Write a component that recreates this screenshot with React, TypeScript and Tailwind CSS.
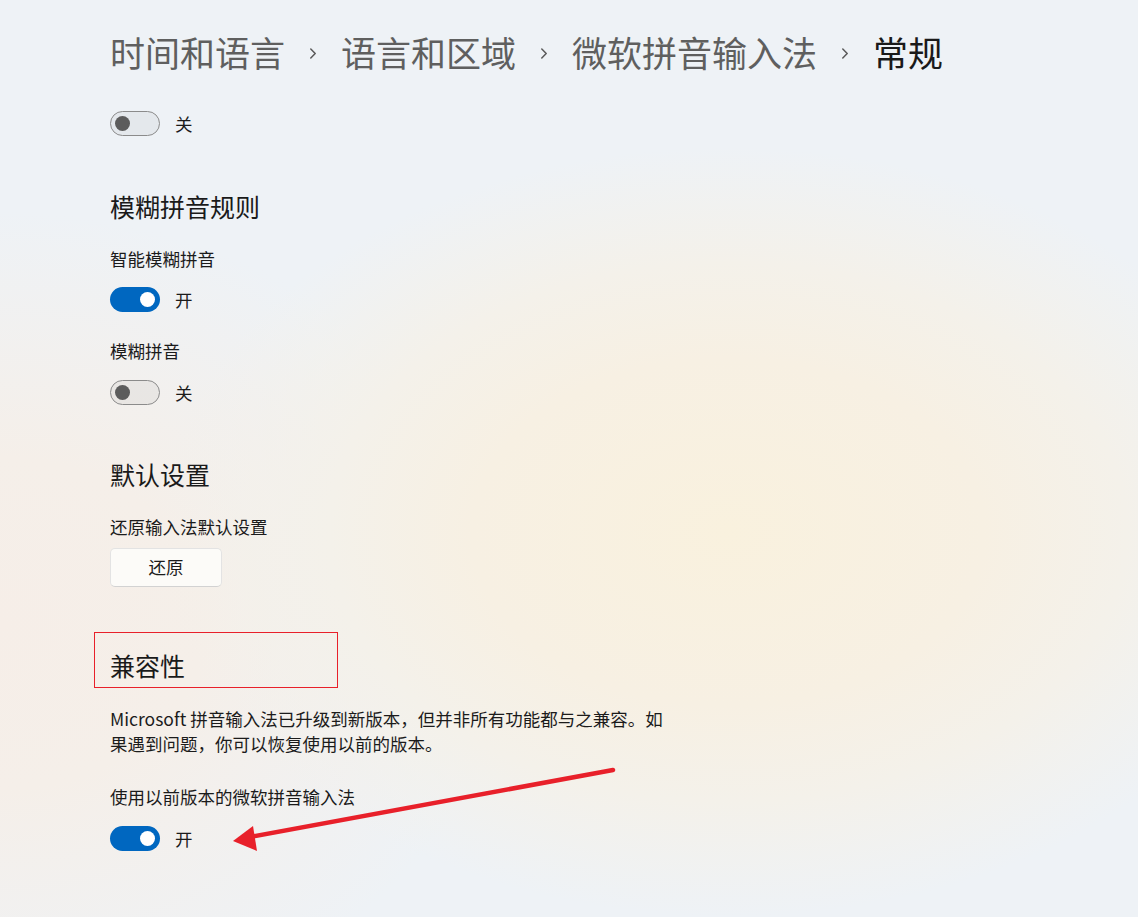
import React from 'react';

const font = { fontFamily: '"Noto Sans CJK SC", "Noto Sans", sans-serif' };

function Chevron() {
  return (
    <svg width="8" height="11" viewBox="0 0 8 11" className="mx-[24px] mt-[2px] shrink-0" fill="none">
      <path d="M1.8 1 L6.2 5.5 L1.8 10" stroke="#5a5a5a" strokeWidth="1.5" strokeLinecap="round" strokeLinejoin="round" />
    </svg>
  );
}

function Toggle({ on }: { on: boolean }) {
  return (
    <div className="flex items-center h-[25px]">
      {on ? (
        <div className="w-[50px] h-[25px] rounded-full bg-[#0067c0] flex items-center justify-end pr-[5px]">
          <div className="w-[15px] h-[15px] rounded-full bg-white" />
        </div>
      ) : (
        <div className="w-[50px] h-[25px] rounded-full border border-[#8b8b8b] bg-[#0000000a] flex items-center pl-[4px]">
          <div className="w-[15px] h-[15px] rounded-full bg-[#5c5c5c]" />
        </div>
      )}
      <span className="ml-[15px] text-[17.5px] leading-[25px] text-[#1b1b1b]">{on ? '开' : '关'}</span>
    </div>
  );
}

export default function App() {
  return (
    <div
      style={font}
      className="relative w-[1138px] h-[917px] overflow-hidden bg-[#eef2f6] bg-[radial-gradient(ellipse_50%_42%_at_64%_58%,#f9f1de_0%,#f7f0e3_45%,#f4f1ea_70%,transparent_100%),radial-gradient(ellipse_45%_45%_at_0%_68%,#f6eee8_0%,#f5efe9_40%,transparent_100%)]"
    >
      <div className="pl-[110px] pt-[26px]">
        {/* 面包屑 */}
        <div className="flex items-center text-[35px] leading-[52px] text-[#5f5f5f]">
          <span>时间和语言</span>
          <Chevron />
          <span>语言和区域</span>
          <Chevron />
          <span>微软拼音输入法</span>
          <Chevron />
          <span className="text-[#1a1a1a]">常规</span>
        </div>

        <div className="mt-[33px]">
          <Toggle on={false} />
        </div>

        <h2 className="mt-[52px] text-[25px] leading-[36px] text-[#1a1a1a]">模糊拼音规则</h2>
        <div className="mt-[22px] text-[17.5px] leading-[25px] text-[#1b1b1b]">智能模糊拼音</div>
        <div className="mt-[16px]">
          <Toggle on={true} />
        </div>
        <div className="mt-[26px] text-[17.5px] leading-[25px] text-[#1b1b1b]">模糊拼音</div>
        <div className="mt-[17px]">
          <Toggle on={false} />
        </div>

        <h2 className="mt-[51px] text-[25px] leading-[36px] text-[#1a1a1a]">默认设置</h2>
        <div className="mt-[22px] text-[17.5px] leading-[25px] text-[#1b1b1b]">还原输入法默认设置</div>
        <button className="mt-[9px] w-[112px] h-[39px] rounded-[5px] border border-[#e3e3e3] border-b-[#d2d2d2] bg-[#fcfbf8] text-[17.5px] text-[#1b1b1b]">
          还原
        </button>

        <div className="relative mt-[60px]">
          <h2 className="text-[25px] leading-[36px] text-[#1a1a1a]">兼容性</h2>
          <div className="absolute left-[-16px] top-[-15px] w-[244px] h-[56px] border border-[#e8202a]" />
        </div>
        <p className="mt-[23px] w-[560px] text-[17.5px] leading-[25px] text-[#1b1b1b]">
          Microsoft 拼音输入法已升级到新版本，但并非所有功能都与之兼容。如果遇到问题，你可以恢复使用以前的版本。
        </p>
        <div className="mt-[28px] text-[17.5px] leading-[25px] text-[#1b1b1b]">使用以前版本的微软拼音输入法</div>
        <div className="mt-[17px]">
          <Toggle on={true} />
        </div>
      </div>

      {/* 标注箭头 */}
      <svg className="absolute left-0 top-0 pointer-events-none" width="1138" height="917">
        <line x1="613" y1="770" x2="250" y2="837" stroke="#e8202a" strokeWidth="4.5" strokeLinecap="round" />
        <polygon points="233,841 253,826 257,851" fill="#e8202a" />
      </svg>
    </div>
  );
}
